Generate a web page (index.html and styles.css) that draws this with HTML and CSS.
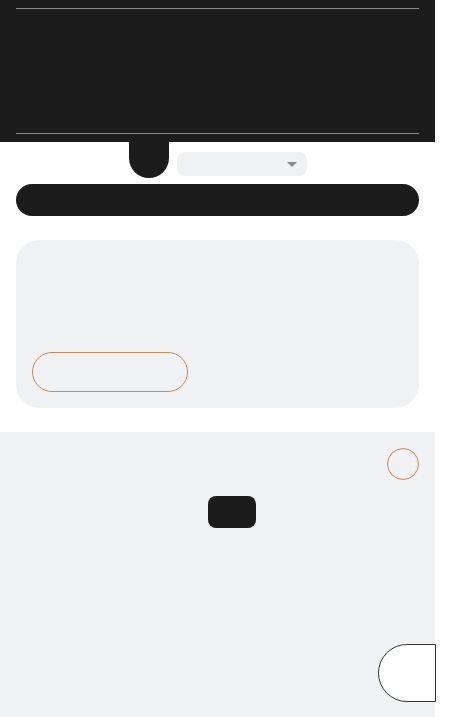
FILE: index.html
```html
<!DOCTYPE html>
<html>
<head>
  <meta charset="utf-8">
  <title>Panel</title>
  <link rel="stylesheet" href="styles.css">
</head>
<body>

<div class="page">

  <div class="page-header">
    <div class="rule"></div>
    <div class="header-body"></div>
    <div class="rule"></div>
  </div>

  <div class="toolbar">
    <div class="tab"></div>
    <div class="select">
      <span class="caret"></span>
    </div>
  </div>

  <div class="search-bar"></div>

  <div class="card">
    <button class="outline-button" type="button"></button>
  </div>

  <div class="bottom-panel">
    <div class="ring"></div>
    <div class="chip"></div>
  </div>

</div>

<div class="side-tab"></div>

</body>
</html>
```

FILE: styles.css
```css
* {
  margin: 0;
  padding: 0;
  box-sizing: border-box;
}

:root {
  --dark: #1c1c1c;
  --soft: #f0f1f3;
  --accent: #c98b5b;
}

html, body {
  height: 100%;
  overflow: hidden;
}

body {
  background: #fff;
  font-family: "Liberation Sans", Arial, sans-serif;
}

.page {
  width: 435px;
}

.page-header {
  background: var(--dark);
  padding: 8px 16px;
}

.page-header .rule {
  height: 1px;
  background: #8a8a8a;
}

.header-body {
  height: 124px;
}

.toolbar {
  display: flex;
  justify-content: center;
  align-items: flex-start;
  gap: 8px;
  height: 36px;
}

.tab {
  width: 40px;
  height: 36px;
  background: var(--dark);
  border-radius: 0 0 20px 20px;
}

.select {
  width: 130px;
  height: 24px;
  margin-top: 10px;
  background: #eff0f2;
  border-radius: 8px;
  display: flex;
  justify-content: flex-end;
  align-items: center;
  padding-right: 10px;
}

.caret {
  width: 0;
  height: 0;
  border-left: 5px solid transparent;
  border-right: 5px solid transparent;
  border-top: 5px solid #8a8a8a;
}

.search-bar {
  margin: 6px 16px 0;
  height: 32px;
  background: var(--dark);
  border-radius: 16px;
}

.card {
  margin: 24px 16px 0;
  height: 168px;
  padding: 16px;
  background: var(--soft);
  border-radius: 24px;
  display: flex;
  flex-direction: column;
  justify-content: flex-end;
}

.outline-button {
  width: 156px;
  height: 40px;
  background: transparent;
  border: 1px solid var(--accent);
  border-radius: 20px;
}

.bottom-panel {
  margin-top: 24px;
  height: 285px;
  padding: 16px;
  background: var(--soft);
  display: flex;
  flex-direction: column;
  gap: 16px;
}

.ring {
  align-self: flex-end;
  width: 32px;
  height: 32px;
  border: 1px solid var(--accent);
  border-radius: 50%;
}

.chip {
  margin-left: 192px;
  width: 48px;
  height: 32px;
  background: var(--dark);
  border-radius: 8px;
}

.side-tab {
  position: fixed;
  right: 14px;
  bottom: 15px;
  width: 58px;
  height: 58px;
  background: #fff;
  border: 1px solid #333;
  border-radius: 29px 0 0 29px;
}
```
